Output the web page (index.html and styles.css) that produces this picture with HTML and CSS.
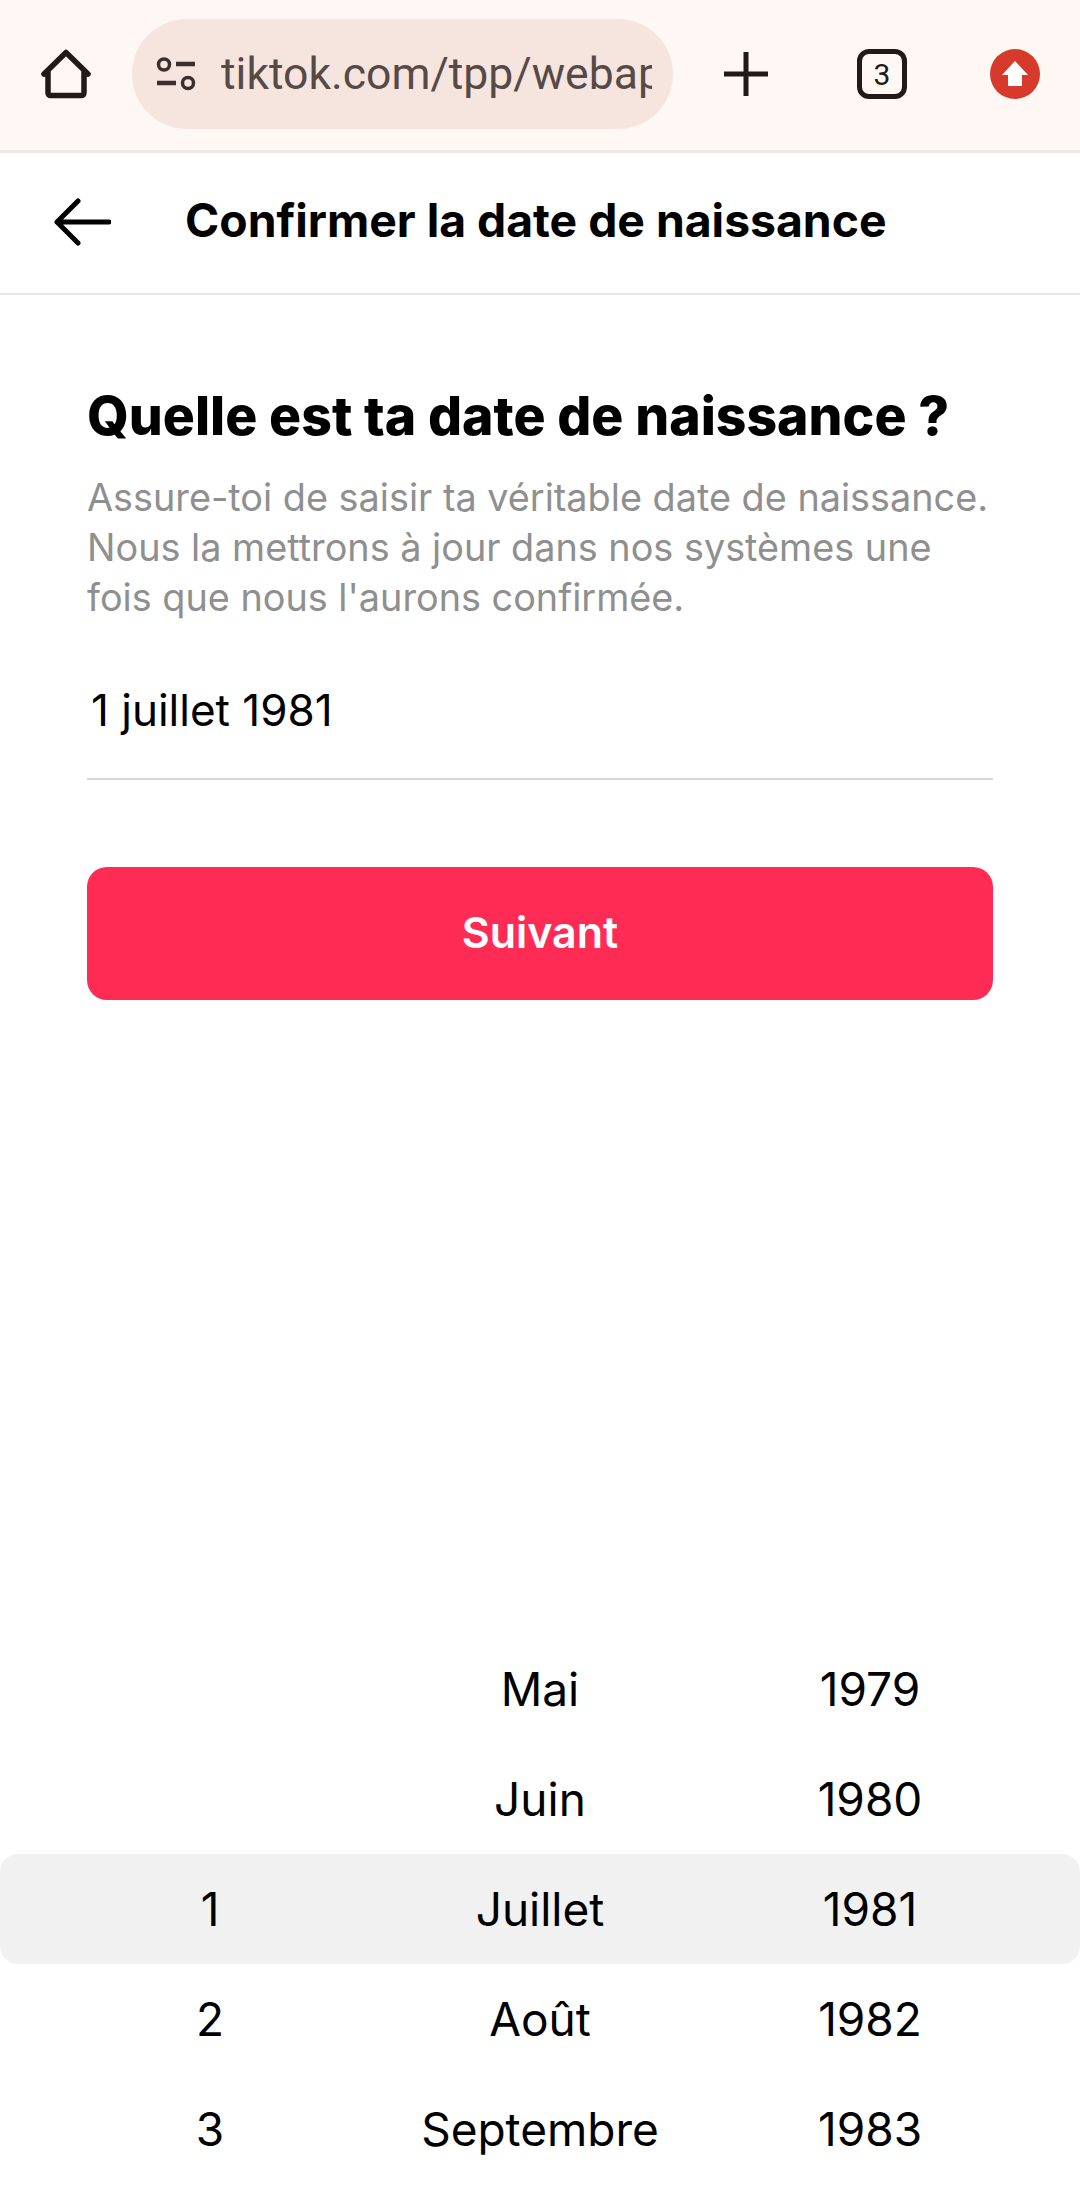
FILE: index.html
```html
<!DOCTYPE html>
<html lang="fr">
<head>
  <meta charset="UTF-8">
  <meta name="viewport" content="width=device-width, initial-scale=1.0">
  <title>Confirmer la date de naissance</title>
  <link rel="stylesheet" href="styles.css">
</head>
<body>
  <div class="browser-bar">
    <svg class="icon-home" viewBox="0 0 54 54" width="54" height="54">
      <path d="M5 27 L27 5.5 L49 27 M9 24 V45.5 Q9 48.5 12 48.5 H42 Q45 48.5 45 45.5 V24" fill="none" stroke="#211a18" stroke-width="5.5" stroke-linecap="round" stroke-linejoin="round"/>
    </svg>
    <div class="url-pill">
      <svg class="icon-tune" viewBox="0 0 44 36" width="44" height="36">
        <circle cx="10" cy="8.5" r="5.5" fill="none" stroke="#3a2f2c" stroke-width="3.5"/>
        <path d="M22 8 H41 M3 27 H22" stroke="#3a2f2c" stroke-width="4.5" fill="none"/>
        <circle cx="34" cy="27" r="5.5" fill="none" stroke="#3a2f2c" stroke-width="3.5"/>
      </svg>
      <div class="url-text">tiktok.com/tpp/webap</div>
    </div>
    <svg class="icon-plus" viewBox="0 0 46 46" width="46" height="46">
      <path d="M1 23 H45 M23 1 V45" stroke="#211a18" stroke-width="5" fill="none"/>
    </svg>
    <div class="tab-count">3</div>
    <svg class="icon-update" viewBox="0 0 50 50" width="50" height="50">
      <circle cx="25" cy="25" r="25" fill="#d63a2b"/>
      <path d="M25 12 L38 26 H32 V37 H18 V26 H12 Z" fill="#fff"/>
    </svg>
  </div>

  <div class="page-header">
    <svg class="icon-back" viewBox="0 0 58 48" width="58" height="48">
      <path d="M56 24 H4 M25 3 L4 24 L25 45" fill="none" stroke="#000" stroke-width="5" stroke-linecap="round" stroke-linejoin="round"/>
    </svg>
    <h2>Confirmer la date de naissance</h2>
  </div>

  <div class="content">
    <h1>Quelle est ta date de naissance ?</h1>
    <p class="hint">Assure-toi de saisir ta véritable date de naissance. Nous la mettrons à jour dans nos systèmes une fois que nous l'aurons confirmée.</p>
    <div class="date-field">1 juillet 1981</div>
    <button class="next-btn">Suivant</button>
  </div>

  <div class="picker">
    <div class="picker-row"><span></span><span>Mai</span><span>1979</span></div>
    <div class="picker-row"><span></span><span>Juin</span><span>1980</span></div>
    <div class="picker-row selected"><span>1</span><span>Juillet</span><span>1981</span></div>
    <div class="picker-row"><span>2</span><span>Août</span><span>1982</span></div>
    <div class="picker-row"><span>3</span><span>Septembre</span><span>1983</span></div>
  </div>
</body>
</html>
```

FILE: styles.css
```css
body {
  margin: 0;
  width: 1080px;
  height: 2188px;
  background: #fff;
  color: #000;
  font-family: Inter, "Liberation Sans", sans-serif;
  display: flex;
  flex-direction: column;
  overflow: hidden;
}

.browser-bar {
  height: 150px;
  flex: none;
  background: #fef7f3;
  border-bottom: 3px solid #f2e6e3;
  display: flex;
  align-items: center;
}

.icon-home { margin-left: 39px; margin-right: 39px; margin-top: -2px; flex: none; }

.url-pill {
  width: 541px;
  height: 110px;
  margin-top: -2px;
  border-radius: 55px;
  background: #f6e4df;
  display: flex;
  align-items: center;
  box-sizing: border-box;
  padding-left: 22px;
  flex: none;
}

.icon-tune { flex: none; margin-right: 23px; }

.url-text {
  width: 431px;
  overflow: hidden;
  white-space: nowrap;
  font-family: Roboto, sans-serif;
  font-size: 44.5px;
  color: #564a46;
}

.icon-plus { margin-left: 50px; margin-top: -2px; flex: none; }

.tab-count {
  width: 50px;
  height: 50px;
  box-sizing: border-box;
  margin-left: 88px;
  margin-top: -2px;
  border: 5px solid #211a18;
  border-radius: 12px;
  font-family: Roboto, sans-serif;
  font-size: 30px;
  color: #211a18;
  display: flex;
  align-items: center;
  justify-content: center;
  flex: none;
}

.icon-update { margin-left: 83px; margin-top: -2px; flex: none; }

.page-header {
  height: 140px;
  flex: none;
  border-bottom: 2px solid #e6e6e6;
  display: flex;
  align-items: center;
}

.icon-back { margin-left: 53px; margin-top: -2px; flex: none; }

.page-header h2 {
  margin: -6px 0 0 74px;
  font-size: 46.3px;
  font-weight: 700;
  white-space: nowrap;
}

.content {
  padding: 0 87px;
}

h1 {
  margin: 91px 0 0;
  font-size: 53.5px;
  font-weight: 800;
  line-height: 60px;
  white-space: nowrap;
}

.hint {
  margin: 26px 0 0;
  font-size: 37.8px;
  line-height: 50px;
  color: #8f8f8f;
}

.date-field {
  margin-top: 62px;
  padding: 0 0 42px 4px;
  font-size: 44px;
  line-height: 52px;
  border-bottom: 2px solid #d6d6d6;
}

.next-btn {
  display: block;
  width: 100%;
  height: 133px;
  margin-top: 87px;
  border: none;
  border-radius: 20px;
  background: #fe2c55;
  color: #fff;
  font-family: inherit;
  font-size: 43px;
  font-weight: 600;
  padding-bottom: 4px;
}

.picker {
  margin-top: auto;
  padding-bottom: 4px;
}

.picker-row {
  height: 110px;
  padding: 0 45px;
  display: grid;
  grid-template-columns: repeat(3, 330px);
  align-items: center;
  text-align: center;
  font-size: 46px;
}

.picker-row.selected {
  background: #f1f1f1;
  border-radius: 18px;
}
```
